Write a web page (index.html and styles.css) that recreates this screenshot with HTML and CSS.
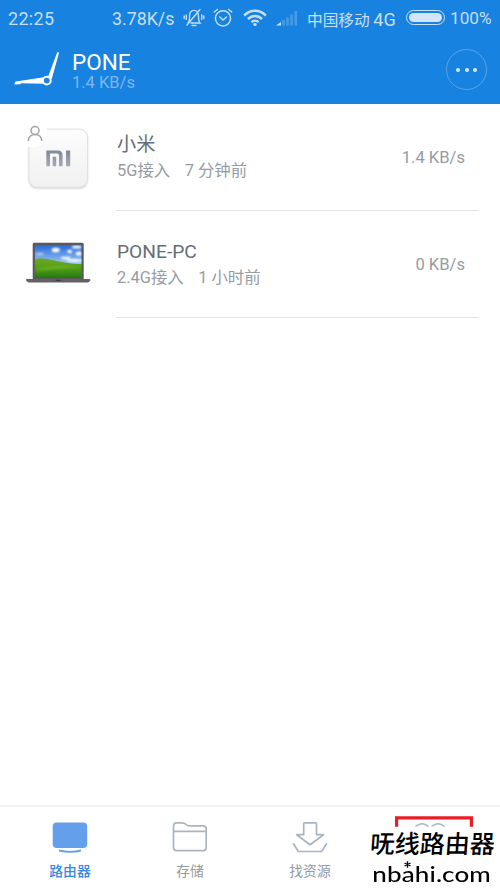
FILE: index.html
```html
<!DOCTYPE html>
<html lang="zh-CN">
<head>
<meta charset="utf-8">
<title>PONE</title>
<link rel="stylesheet" href="styles.css">
</head>
<body>
<div class="app">
  <header class="top">
    <div class="status">
      <span class="time">22:25</span>
      <span class="net-speed">3.78K/s</span>
      <svg class="bell" width="22" height="20" viewBox="0 0 22 20" fill="none" stroke="currentColor" stroke-width="1.4" stroke-linecap="round">
        <path d="M5 15c2-2 1.400-4 1.500-7C6.700 4 8 2.400 11 2.400S15.300 4 15.500 8c.1 3-.3 5 1.500 7H8M9 17.500h4M17 1.500 4 17M3.300 7v4.500M1.200 8v2.500M18.700 7v4.500M20.800 8v2.500"/>
      </svg>
      <svg class="alarm" width="20" height="20" viewBox="0 0 20 20" fill="none" stroke="currentColor" stroke-width="1.5" stroke-linecap="round">
        <circle cx="10" cy="10.300" r="7.600"/><path d="m6.800 9 3.200 3 3.400-3M1.300 4 4.300 1.500M18.700 4l-3-2.500"/>
      </svg>
      <svg class="wifi" width="24" height="20" viewBox="0 0 24 20" fill="none" stroke="currentColor" stroke-width="2.500">
        <path d="M1.200 7.500C7.500 1.200 16.500 1.200 22.800 7.500M5 11c4-4 10-4 14 0M8.500 14.200c2-2 5-2 7 0"/><circle cx="12" cy="16.400" r="1.700" fill="currentColor" stroke="none"/>
      </svg>
      <svg class="signal" width="22" height="20" viewBox="0 0 22 20" fill="currentColor">
        <path d="M0 17.500 5 14v3.500z"/><path opacity=".28" d="M6.200 12h2.600v5.500H6.200zM10.200 9.500h2.600v8h-2.600zM14.200 6.500h2.600v11h-2.600zM18.400 3H21v14.500h-2.600z"/>
      </svg>
      <span class="carrier">中国移动 <span class="net">4G</span></span>
      <span class="battery"><span class="charge"></span></span>
      <span class="percent">100%</span>
    </div>
    <div class="title-bar">
      <svg class="logo" width="48" height="38" viewBox="0 0 48 38">
        <path fill="#fff" d="M.2 35.500 1.500 32.600 30 28.200l4.500-1.400L43 3.800 44 2.700 45 4 38 29l-3 5-5.500.8L7 34.300 6 35.200z"/>
        <circle cx="32.800" cy="31.600" r="3.900" fill="#1782df" stroke="#fff" stroke-width="2"/>
      </svg>
      <div class="router">
        <h1>PONE</h1>
        <p>1.4 KB/s</p>
      </div>
      <span class="more"><i></i><i></i><i></i></span>
    </div>
  </header>

  <main class="devices">
    <section class="device">
      <div class="picture">
        <svg width="80" height="80" viewBox="0 0 80 80">
          <defs>
            <linearGradient id="tile" x2="0" y2="1"><stop stop-color="#fdfdfd"/><stop offset="1" stop-color="#f0f0f0"/></linearGradient>
            <linearGradient id="mi" x2="0" y2="1"><stop stop-color="#808899"/><stop offset="1" stop-color="#a6abb7"/></linearGradient>
            <filter id="shadow" x="-20%" y="-20%" width="140%" height="140%"><feGaussianBlur stdDeviation="1.200"/></filter>
          </defs>
          <rect x="14" y="10" width="58.500" height="58.500" rx="8" fill="#aaa" opacity=".6" filter="url(#shadow)"/>
          <rect x="14" y="9.200" width="58.500" height="58" rx="8" fill="url(#tile)" stroke="#e2e2e2"/>
          <path fill="#fff" d="M5 3h26l1 6c1 10-5 18-13 18H5z"/>
          <path fill="url(#mi)" d="M31.300 30.500H43c3 0 4.600 1.800 4.600 4.500v11.200H44V35.700c0-1.400-.7-2.200-2.200-2.200H35v12.700h-3.700zM37.700 36.800h3.500v9.400h-3.500zM51 30.500h4.200v15.700H51z"/>
          <g fill="none" stroke="#a3a3a3" stroke-width="1.500"><circle cx="20" cy="10.500" r="4"/><path d="M13.300 21c0-8.800 13.500-8.800 13.500 0"/></g>
        </svg>
      </div>
      <div class="row">
        <div class="info"><h2>小米</h2><p>5G接入<span>7 分钟前</span></p></div>
        <div class="rate">1.4 KB/s</div>
      </div>
    </section>
    <section class="device second">
      <div class="picture">
        <svg width="80" height="80" viewBox="0 0 80 80">
          <defs>
            <linearGradient id="sky" x2="0" y2="1"><stop stop-color="#2768d5"/><stop offset="1" stop-color="#9cc9f8"/></linearGradient>
            <linearGradient id="hill" x2="0" y2="1"><stop stop-color="#6fa91e"/><stop offset=".5" stop-color="#4f9e19"/><stop offset="1" stop-color="#247711"/></linearGradient>
            <filter id="soft" x="-30%" y="-30%" width="160%" height="160%"><feGaussianBlur stdDeviation=".8"/></filter>
            <clipPath id="screen"><path d="M19 19h47v33H19z"/></clipPath>
          </defs>
          <g transform="translate(.7 0)">
          <rect x="17" y="16.700" width="51" height="37.500" rx="1.500" fill="#59595b"/>
          <g clip-path="url(#screen)">
            <path fill="url(#sky)" d="M19 19h47v19H19z"/>
            <g fill="#fff" filter="url(#soft)"><ellipse cx="40" cy="24" rx="4" ry="2.300"/><ellipse cx="61" cy="21" rx="5" ry="1.600"/><ellipse cx="54" cy="25.500" rx="2.500" ry="1.800"/><ellipse cx="63" cy="27.500" rx="3" ry="2"/><ellipse cx="50" cy="32" rx="5" ry="1.300"/><ellipse cx="59" cy="34.500" rx="8" ry="1.400"/><ellipse cx="24" cy="28" rx="4" ry="1" opacity=".6"/></g>
            <path fill="url(#hill)" d="M19 33c9-1 14 0 22 2 9 2 16 3 25 3v14H19z"/>
            <path fill="#94c42e" opacity=".4" filter="url(#soft)" d="M22 43c13-4 26-4 42-2-14 1-26 2-42 4z"/>
          </g>
          <path fill="#626264" d="M10.500 53h64v2l-2.500 1.500H13L10.500 55z"/><path fill="#3d3d3f" d="M40 53.800h5v1.200h-5z"/>
          </g>
        </svg>
      </div>
      <div class="row">
        <div class="info"><h2>PONE-PC</h2><p>2.4G接入<span>1 小时前</span></p></div>
        <div class="rate">0 KB/s</div>
      </div>
    </section>
  </main>

  <nav class="tabs">
    <div class="tab active">
      <svg width="40" height="36" viewBox="0 0 40 36"><rect x="2.700" y="1.500" width="34.500" height="25.500" rx="4" fill="#649fec"/><path d="M9 29.500q11 2.600 22 0" fill="none" stroke="#649fec" stroke-width="1.800"/></svg>
      <span>路由器</span>
    </div>
    <div class="tab">
      <svg width="40" height="36" viewBox="0 0 40 36" fill="none" stroke="#abb5c0" stroke-width="1.700"><path d="M3.500 26.500V5q0-3.200 3.200-3.200h5.500c3.600 0 4 3 7 3h14q3 0 3 3v18.700q0 3.200-3 3.200H6.700q-3.200 0-3.200-3.200zM3.500 10.300h32.700"/></svg>
      <span>存储</span>
    </div>
    <div class="tab">
      <svg width="40" height="36" viewBox="0 0 40 36" fill="none" stroke="#a8b4c1" stroke-width="1.700" stroke-linejoin="round" stroke-linecap="round"><path d="M13.700 2.500q0-.7.700-.7h11.400q.7 0 .7.700v11.200h7L20.100 23.700 6.700 13.700h7zM3.500 22.800l4.800 7.700h23.400l4.800-7.700"/></svg>
      <span>找资源</span>
    </div>
    <div class="tab marked">
      <svg width="78" height="12" viewBox="0 0 78 12" fill="none"><path d="M1.600 10.700V1.900h74.800v8.800" stroke="#ed1c24" stroke-width="3.200"/><path d="M20.500 10.500q6.500-5.500 13 0M36.500 10.500q6.500-5.500 13 0" stroke="#a8b4c1" stroke-width="1.600"/></svg>
    </div>
  </nav>
  <div class="watermark">
    <div class="wm-name">呒线路由器</div>
    <div class="wm-site">nbahi.com</div>
    <svg class="wm-star" width="7" height="7" viewBox="0 0 7 7" fill="none" stroke="#000" stroke-width="1.300"><path d="M3.500.3v6.400M.5 2l6 3M6.500 2l-6 3"/></svg>
  </div>
</div>
</body>
</html>
```
FILE: styles.css
```css
* { box-sizing: border-box; }
body, h1, h2, p { margin: 0; }
body { background: #fff; font-family: Roboto, "Noto Sans CJK SC", sans-serif; }
svg { display: block; flex: none; }
h1, h2 { font-weight: 400; }
.app { position: relative; display: flex; flex-direction: column; width: 500px; height: 889px; overflow: hidden; }
.top { height: 104px; background: #1782df; color: #fff; }
.status { display: flex; align-items: center; height: 35px; padding-left: 8px; color: #c7dff6; font-size: 18px; line-height: 35px; white-space: nowrap; }
.time { width: 104px; padding-top: 2px; letter-spacing: .3px; }
.net-speed { width: 71px; padding-top: 2px; font-size: 17.800px; }
.bell { margin-right: 8px; }
.alarm { margin-right: 10px; }
.wifi { margin-right: 9px; }
.signal { margin-right: 9px; }
.carrier { width: 99px; padding-top: 3px; font-size: 15.700px; font-family: "Noto Sans CJK SC", sans-serif; }
.net { font-family: Roboto, sans-serif; font-size: 18px; }
.battery { flex: none; width: 39px; height: 15px; margin-right: 5px; padding: 2px; border: 1.500px solid #c7dff6; border-radius: 8px; }
.charge { display: block; height: 100%; border-radius: 5px; background: #d3e5f7; }
.percent { padding-top: 1px; font-size: 17.200px; }
.title-bar { display: flex; height: 69px; padding: 14px 13px 0 14px; }
.logo { margin-right: 10px; }
.router { flex: 1; }
.router h1 { font-size: 22.500px; line-height: 26px; }
.router p { margin-top: -1px; color: #7eb7ed; font-size: 16.500px; line-height: 18px; }
.more { display: flex; align-items: center; justify-content: center; gap: 4.300px; width: 41px; height: 41px; border: 1px solid #58a4e8; border-radius: 50%; }
.more i { width: 4px; height: 4px; border-radius: 50%; background: #d7e9fa; }
.devices { flex: 1; }
.device { display: flex; height: 107px; }
.picture { width: 101px; padding: 16px 0 0 15px; margin-right: 15px; }
.second .picture { padding-top: 15px; }
.row { display: flex; justify-content: space-between; width: 363px; padding: 28px 14px 0 1px; border-bottom: 1px solid #e1e3e5; }
.info h2 { color: #656e78; font-size: 19.200px; line-height: 26px; }
.info p { color: #959ca3; font-size: 16.400px; line-height: 26px; }
.info p span { margin-left: 14.500px; }
.rate { padding-top: 13px; color: #959ca3; font-size: 16.600px; line-height: 26px; }
.tabs { display: flex; height: 84px; padding-left: 10px; border-top: 2px solid #f1f2f2; background: #fff; }
.tab { display: flex; flex-direction: column; align-items: center; flex: none; width: 120px; padding-top: 14px; color: #929aa2; font-size: 13.800px; line-height: 20px; }
.tab span { margin-top: 4px; }
.active { color: #3489e0; font-weight: 500; }
.marked { align-items: flex-start; padding: 9px 0 0 25px; }
.watermark { position: absolute; left: 370px; top: 826px; width: 130px; height: 63px; color: #000; white-space: nowrap; }
.wm-name { font-family: "Noto Sans CJK SC", sans-serif; font-size: 25px; line-height: 32px; font-weight: 500; transform: skewX(-4deg); }
.wm-site { width: 120px; margin-top: 2px; padding-left: 2px; font-family: Lato, sans-serif; font-size: 22px; line-height: 27px; font-weight: 500; letter-spacing: .1px; transform: scaleX(1.18); transform-origin: 0 0; }
.wm-star { position: absolute; left: 34px; top: 35px; }
```
